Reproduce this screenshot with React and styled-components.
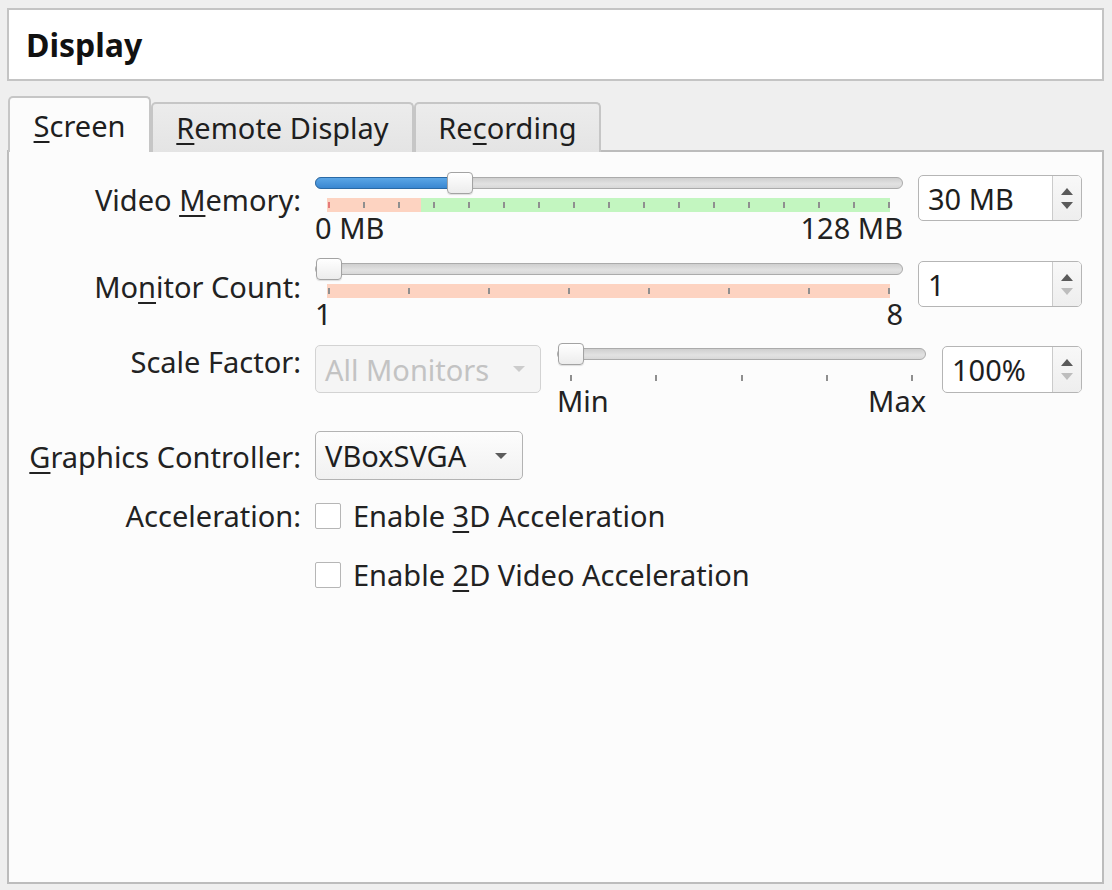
import styled, { createGlobalStyle } from "styled-components";

const GlobalStyle = createGlobalStyle`
  html, body {
    margin: 0;
    padding: 0;
    background: #efefef;
  }
  body {
    font-family: "Noto Sans", "Open Sans", sans-serif;
    font-size: 29px;
    color: #222;
  }
`;

const Page = styled.div`
  width: 1112px;
  height: 890px;
  box-sizing: border-box;
  padding: 8px 8px 6px 7px;
  display: flex;
  flex-direction: column;
`;

const TitleBox = styled.div`
  height: 73px;
  flex: none;
  box-sizing: border-box;
  border: 2px solid #c4c4c4;
  background: #fff;
  display: flex;
  align-items: center;
  padding-left: 17px;
  font-size: 32px;
  font-weight: 700;
  color: #111;
`;

const TabBar = styled.div`
  display: flex;
  align-items: flex-end;
  height: 56px;
  margin-top: 15px;
  padding-left: 1px;
  position: relative;
  z-index: 1;
`;

const Tab = styled.div`
  box-sizing: border-box;
  width: ${(p) => p.$w}px;
  height: ${(p) => (p.$active ? 56 : 50)}px;
  padding-top: ${(p) => (p.$active ? 9 : 5)}px;
  text-align: center;
  line-height: 38px;
  border: 2px solid #c6c6c6;
  border-bottom: none;
  border-radius: 5px 5px 0 0;
  background: ${(p) => (p.$active ? "#fcfcfc" : "linear-gradient(#ececec, #e4e4e4)")};
  color: #1e1e1e;
  white-space: nowrap;
`;

const Panel = styled.div`
  flex: 1;
  margin-top: -2px;
  box-sizing: border-box;
  border: 2px solid #bcbcbc;
  background: #fcfcfc;
  padding: 20px 20px 0 0;
  display: flex;
  flex-direction: column;
`;

const Row = styled.div`
  display: grid;
  grid-template-columns: 292px 1fr;
  column-gap: 14px;
  margin-top: ${(p) => p.$gap || 0}px;
  align-items: ${(p) => (p.$center ? "center" : "start")};
`;

const Label = styled.div`
  text-align: right;
  line-height: 38px;
  padding-top: ${(p) => p.$offset || 0}px;
  white-space: nowrap;
  color: #222;
`;

const Key = styled.span`
  text-decoration: underline;
  text-decoration-thickness: 2px;
  text-underline-offset: 4px;
`;

const Controls = styled.div`
  display: flex;
  align-items: flex-start;
  gap: ${(p) => p.$gap || 15}px;
`;

const SliderBox = styled.div`
  flex: 1;
  min-width: 0;
`;

const Track = styled.div`
  position: relative;
  height: 22px;
  box-sizing: border-box;
  padding-top: 5px;
`;

const Groove = styled.div`
  height: 12px;
  box-sizing: border-box;
  border: 1px solid #ababab;
  border-radius: 6px;
  background: linear-gradient(#cfcfcf, #e2e2e2 60%, #d8d8d8);
`;

const Fill = styled.div`
  margin: -1px;
  height: 12px;
  box-sizing: border-box;
  border: 1px solid #2a6aa6;
  border-radius: 6px;
  background: linear-gradient(#5ba6e6, #3a87d1);
`;

const Handle = styled.div`
  position: absolute;
  top: 0;
  width: 26px;
  height: 22px;
  box-sizing: border-box;
  border: 1px solid #a3a3a3;
  border-radius: 4px;
  background: linear-gradient(#ffffff, #ececec);
  box-shadow: 0 1px 1px rgba(0, 0, 0, 0.12);
`;

const TickStrip = styled.div`
  margin: ${(p) => (p.$band ? "4px 13px 0 12px" : "10px 13px 0 12px")};
  height: ${(p) => (p.$band ? 14 : 6)}px;
  padding-left: 1px;
  display: flex;
  align-items: center;
  justify-content: space-between;
  background: ${(p) =>
    p.$band
      ? `linear-gradient(to right, #fdd3c1 0 ${p.$split}%, #c3f6c0 ${p.$split}% 100%)`
      : "transparent"};
`;

const Tick = styled.span`
  width: 2px;
  height: 6px;
  background: ${(p) => (p.$red ? "#e57a7a" : "#8f8f8f")};
`;

const ScaleLabels = styled.div`
  display: flex;
  justify-content: space-between;
  line-height: 30px;
  margin-top: ${(p) => p.$top}px;
  color: #222;
`;

const SpinBox = styled.div`
  flex: none;
  width: ${(p) => p.$w}px;
  height: ${(p) => p.$h || 46}px;
  margin-top: 3px;
  box-sizing: border-box;
  border: 1px solid #b5b5b5;
  border-radius: 5px;
  background: #fff;
  display: flex;
  overflow: hidden;
`;

const SpinValue = styled.div`
  flex: 1;
  padding-left: 9px;
  display: flex;
  align-items: center;
  color: #1e1e1e;
`;

const SpinArrows = styled.div`
  width: 28px;
  border-left: 1px solid #cbcbcb;
  background: linear-gradient(#f8f8f8, #eeeeee);
  display: flex;
  flex-direction: column;
  align-items: center;
  justify-content: center;
  gap: 7px;
`;

const Arrow = styled.span`
  width: 0;
  height: 0;
  border-left: 6px solid transparent;
  border-right: 6px solid transparent;
  ${(p) =>
    p.$up
      ? `border-bottom: 7px solid ${p.$dim ? "#bdbdbd" : "#5a5a5a"};`
      : `border-top: 7px solid ${p.$dim ? "#bdbdbd" : "#5a5a5a"};`}
`;

const Combo = styled.div`
  flex: none;
  width: ${(p) => p.$w}px;
  height: ${(p) => p.$h}px;
  margin-top: ${(p) => p.$top || 0}px;
  box-sizing: border-box;
  border: 1px solid ${(p) => (p.$disabled ? "#d3d3d3" : "#b3b3b3")};
  border-radius: 5px;
  background: ${(p) => (p.$disabled ? "#f5f5f5" : "linear-gradient(#fdfdfd, #f1f1f1)")};
  color: ${(p) => (p.$disabled ? "#c3c3c3" : "#1e1e1e")};
  display: flex;
  align-items: center;
  justify-content: space-between;
  padding: 0 15px 0 9px;
  white-space: nowrap;
`;

const ComboArrow = styled.span`
  width: 0;
  height: 0;
  border-left: 6px solid transparent;
  border-right: 6px solid transparent;
  border-top: 6px solid ${(p) => (p.$disabled ? "#cccccc" : "#5c5c5c")};
`;

const CheckItem = styled.label`
  display: flex;
  align-items: center;
  gap: 12px;
  line-height: 38px;
  color: #222;
`;

const CheckBox = styled.span`
  width: 26px;
  height: 26px;
  box-sizing: border-box;
  border: 1px solid #b6b6b6;
  border-radius: 2px;
  background: #fff;
`;

function Slider({ min, max, value, ticks, band, split, labels, firstTickRed }) {
  const frac = (value - min) / (max - min);
  return (
    <SliderBox>
      <Track>
        <Groove>
          {frac > 0 && (
            <Fill style={{ width: `calc(${frac} * (100% - 26px) + 15px)` }} />
          )}
        </Groove>
        <Handle style={{ left: `calc(${frac} * (100% - 26px) + ${frac > 0 ? 0 : 1}px)` }} />
      </Track>
      <TickStrip $band={band} $split={split}>
        {Array.from({ length: ticks }).map((_, i) => (
          <Tick key={i} $red={firstTickRed && i === 0} />
        ))}
      </TickStrip>
      <ScaleLabels $top={band ? 1 : 5}>
        <span>{labels[0]}</span>
        <span>{labels[1]}</span>
      </ScaleLabels>
    </SliderBox>
  );
}

function Spin({ value, width, height, atMin }) {
  return (
    <SpinBox $w={width} $h={height}>
      <SpinValue>{value}</SpinValue>
      <SpinArrows>
        <Arrow $up />
        <Arrow $dim={atMin} />
      </SpinArrows>
    </SpinBox>
  );
}

export default function App() {
  return (
    <>
      <GlobalStyle />
      <Page>
        <TitleBox>Display</TitleBox>

        <TabBar>
          <Tab $active $w={143}>
            <Key>S</Key>creen
          </Tab>
          <Tab $w={263}>
            <Key>R</Key>emote Display
          </Tab>
          <Tab $w={187}>
            Re<Key>c</Key>ording
          </Tab>
        </TabBar>

        <Panel>
          <Row>
            <Label $offset={9}>
              Video <Key>M</Key>emory:
            </Label>
            <Controls>
              <Slider
                min={0}
                max={128}
                value={30}
                ticks={17}
                band
                split={16.7}
                firstTickRed
                labels={["0 MB", "128 MB"]}
              />
              <Spin value="30 MB" width={164} />
            </Controls>
          </Row>

          <Row $gap={15}>
            <Label $offset={10}>
              Mo<Key>n</Key>itor Count:
            </Label>
            <Controls>
              <Slider
                min={1}
                max={8}
                value={1}
                ticks={8}
                band
                split={100}
                labels={["1", "8"]}
              />
              <Spin value="1" width={164} atMin />
            </Controls>
          </Row>

          <Row $gap={14}>
            <Label $offset={0}>Scale Factor:</Label>
            <Controls $gap={16}>
              <Combo $w={226} $h={48} $top={2} $disabled>
                All Monitors
                <ComboArrow $disabled />
              </Combo>
              <Slider
                min={100}
                max={200}
                value={100}
                ticks={5}
                labels={["Min", "Max"]}
              />
              <Spin value="100%" width={140} height={47} atMin />
            </Controls>
          </Row>

          <Row $gap={15}>
            <Label $offset={7}>
              <Key>G</Key>raphics Controller:
            </Label>
            <Controls>
              <Combo $w={208} $h={49}>
                VBoxSVGA
                <ComboArrow />
              </Combo>
            </Controls>
          </Row>

          <Row $gap={17} $center>
            <Label>Acceleration:</Label>
            <CheckItem>
              <CheckBox />
              <span>
                Enable <Key>3</Key>D Acceleration
              </span>
            </CheckItem>
          </Row>

          <Row $gap={21} $center>
            <span />
            <CheckItem>
              <CheckBox />
              <span>
                Enable <Key>2</Key>D Video Acceleration
              </span>
            </CheckItem>
          </Row>
        </Panel>
      </Page>
    </>
  );
}
